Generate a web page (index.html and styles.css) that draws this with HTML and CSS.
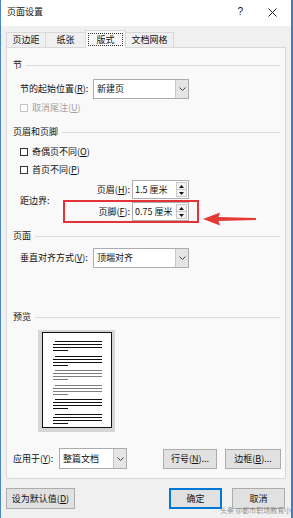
FILE: index.html
```html
<!DOCTYPE html>
<html lang="zh-CN">
<head>
  <meta charset="UTF-8" />
  <meta name="viewport" content="width=device-width, initial-scale=1.0"/>
  <title>页面设置</title>
  <link rel="stylesheet" href="styles.css">
</head>
<body>
  <div class="dialog">
    <div class="titlebar">
      <span class="title">页面设置</span>
      <span class="help">?</span>
      <svg class="close" width="9" height="9" viewBox="0 0 9 9"><path d="M0.5 0.5L8.5 8.5M8.5 0.5L0.5 8.5" stroke="#222" stroke-width="1"/></svg>
    </div>

    <div class="tabs">
      <div class="tab t1">页边距</div>
      <div class="tab t2">纸张</div>
      <div class="tab t3 active"><span class="focus">版式</span></div>
      <div class="tab t4">文档网格</div>
    </div>

    <div class="panel">
      <div class="group-head first"><span>节</span></div>
      <div class="row">
        <span class="lbl">节的起始位置(<u>R</u>):</span>
        <div class="select wide">
          <span>新建页</span>
          <i class="drop"><svg width="7" height="4" viewBox="0 0 7 4"><path d="M0.5 0.5L3.5 3.5L6.5 0.5" fill="none" stroke="#444"/></svg></i>
        </div>
      </div>
      <div class="check disabled c1"><i class="box"></i><span>取消尾注(<u>U</u>)</span></div>

      <div class="group-head g2"><span>页眉和页脚</span></div>
      <div class="check c2"><i class="box"></i><span>奇偶页不同(<u>O</u>)</span></div>
      <div class="check c3"><i class="box"></i><span>首页不同(<u>P</u>)</span></div>

      <div class="margins">
        <span class="dist">距边界:</span>
        <div class="spins">
          <span class="spin-lbl">页眉(<u>H</u>):</span>
          <div class="spin">
            <span>1.5 厘米</span>
            <div class="arrows">
              <i class="up"><svg width="5" height="3" viewBox="0 0 5 3"><path d="M2.5 0L5 3H0Z" fill="#111"/></svg></i>
              <i class="down"><svg width="5" height="3" viewBox="0 0 5 3"><path d="M0 0H5L2.5 3Z" fill="#111"/></svg></i>
            </div>
          </div>
          <span class="spin-lbl">页脚(<u>F</u>):</span>
          <div class="spin">
            <span>0.75 厘米</span>
            <div class="arrows">
              <i class="up"><svg width="5" height="3" viewBox="0 0 5 3"><path d="M2.5 0L5 3H0Z" fill="#111"/></svg></i>
              <i class="down"><svg width="5" height="3" viewBox="0 0 5 3"><path d="M0 0H5L2.5 3Z" fill="#111"/></svg></i>
            </div>
          </div>
        </div>
      </div>

      <div class="group-head g3"><span>页面</span></div>
      <div class="row r2">
        <span class="lbl">垂直对齐方式(<u>V</u>):</span>
        <div class="select wide">
          <span>顶端对齐</span>
          <i class="drop"><svg width="7" height="4" viewBox="0 0 7 4"><path d="M0.5 0.5L3.5 3.5L6.5 0.5" fill="none" stroke="#444"/></svg></i>
        </div>
      </div>

      <div class="group-head g4"><span>预览</span></div>
      <div class="preview">
        <div class="page">
          <div class="para"><i class="ln indent"></i><i class="ln"></i><i class="ln"></i><i class="ln short"></i></div>
          <div class="para"><i class="ln indent"></i><i class="ln"></i><i class="ln"></i><i class="ln short"></i></div>
          <div class="para gray"><i class="ln indent"></i><i class="ln"></i><i class="ln"></i><i class="ln short"></i></div>
          <div class="para gray"><i class="ln indent"></i><i class="ln"></i><i class="ln"></i><i class="ln short"></i></div>
          <div class="para"><i class="ln indent"></i><i class="ln"></i><i class="ln"></i><i class="ln short"></i></div>
          <div class="para"><i class="ln indent"></i><i class="ln"></i><i class="ln"></i><i class="ln short"></i></div>
        </div>
      </div>

      <div class="apply">
        <span class="apply-lbl">应用于(<u>Y</u>):</span>
        <div class="select narrow">
          <span>整篇文档</span>
          <i class="drop"><svg width="7" height="4" viewBox="0 0 7 4"><path d="M0.5 0.5L3.5 3.5L6.5 0.5" fill="none" stroke="#444"/></svg></i>
        </div>
        <button class="btn lineno">行号(<u>N</u>)...</button>
        <button class="btn border">边框(<u>B</u>)...</button>
      </div>
    </div>

    <div class="footer">
      <button class="btn default-btn">设为默认值(<u>D</u>)</button>
      <button class="btn ok">确定</button>
      <button class="btn cancel">取消</button>
    </div>

    <!-- annotation drawn over the dialog -->
    <div class="highlight"></div>
    <svg class="arrow" width="60" height="20" viewBox="0 0 60 20">
      <path d="M3 11L20 4.5L18.5 9L56 10L56 12L18.5 13L20 17.5Z" fill="#e53935"/>
    </svg>
    <span class="watermark">头条 @都市职场教育小</span>
  </div>
</body>
</html>
```

FILE: styles.css
```css
* {
  box-sizing: border-box;
}

body {
  margin: 0;
  font-family: "Noto Sans CJK SC", "Noto Sans", sans-serif;
  font-size: 9px;
  line-height: 12px;
  color: #111;
}

u {
  text-decoration: underline;
  text-underline-offset: 1px;
}

.dialog {
  position: relative;
  width: 293px;
  height: 518px;
  background: #f0f0f0;
  border-left: 1px solid #4a86c8;
  border-right: 2px solid #3f7dc0;
  overflow: hidden;
}

/* title bar */
.titlebar {
  display: flex;
  align-items: center;
  height: 26px;
  padding: 0 14px 2px 6px;
  background: #fff;
}

.title {
  flex: 1;
}

.help {
  font-family: "Liberation Sans", sans-serif;
  font-size: 10px;
  margin-right: 25px;
}

.close {
  display: block;
}

/* tabs */
.tabs {
  display: flex;
  align-items: flex-end;
  height: 21px;
  padding-left: 5px;
}

.tab {
  height: 15px;
  border: 1px solid #d9d9d9;
  border-bottom: none;
  margin-right: -1px;
  display: flex;
  align-items: center;
  justify-content: center;
  background: #f0f0f0;
}

.t1 { width: 40px; }
.t2 { width: 41px; }
.t3 { width: 41px; }
.t4 { width: 49px; }

.tab.active {
  height: 18px;
  margin-bottom: -1px;
  background: #f9f9f9;
  position: relative;
  z-index: 1;
}

.focus {
  border: 1px dotted #333;
  padding: 0 7px;
  line-height: 11px;
}

/* tab page */
.panel {
  margin: 0 5px;
  height: 432px;
  border: 1px solid #d9d9d9;
  background: #f9f9f9;
}

.group-head {
  display: flex;
  align-items: center;
  gap: 4px;
  height: 12px;
  padding: 0 5px 0 6px;
}

.group-head::after {
  content: "";
  flex: 1;
  height: 1px;
  background: #dcdcdc;
}

.group-head.first { margin-top: 11px; }
.group-head.g2 { margin-top: 12px; }
.group-head.g3 { margin-top: 9px; }
.group-head.g4 { margin-top: 43px; }

.row {
  display: flex;
  align-items: center;
  height: 20px;
  margin-top: 8px;
  padding-left: 13px;
}

.row.r2 { margin-top: 6px; }

.lbl {
  width: 73px;
}

.select {
  display: flex;
  height: 100%;
  border: 1px solid #acacac;
  background: #fff;
}

.select span {
  flex: 1;
  padding-left: 3px;
  display: flex;
  align-items: center;
}

.select.wide { width: 96px; }
.select.narrow { width: 68px; height: 21px; }

.drop {
  width: 13px;
  display: flex;
  align-items: center;
  justify-content: center;
  background: #e5e5e5;
  border-left: 1px solid #c8c8c8;
}

.drop svg {
  display: block;
}

/* check boxes */
.check {
  display: flex;
  align-items: center;
  gap: 4px;
  height: 12px;
  padding-left: 13px;
}

.check .box {
  width: 8px;
  height: 8px;
  border: 1px solid #333;
  background: #fff;
}

.check.disabled { color: #a3a3a3; }
.check.disabled .box { border-color: #c6c6c6; }

.c1 { margin-top: 3px; }
.c2 { margin-top: 8px; }
.c3 { margin-top: 6px; }

/* header / footer distance */
.margins {
  display: flex;
  align-items: center;
  height: 41px;
  margin-top: 4px;
  padding-left: 13px;
}

.dist {
  width: 60px;
}

.spins {
  display: grid;
  grid-template-columns: 50px 57px;
  grid-template-rows: 19px 19px;
  column-gap: 2px;
  row-gap: 3px;
  align-items: center;
}

.spin-lbl {
  text-align: right;
}

.spin {
  display: flex;
  height: 19px;
  border: 1px solid #abadb3;
  background: #fff;
}

.spin span {
  flex: 1;
  padding-left: 2px;
  display: flex;
  align-items: center;
}

.arrows {
  width: 11px;
  margin: 1px 1px 1px 0;
  display: flex;
  flex-direction: column;
}

.arrows i {
  flex: 1;
  display: flex;
  align-items: center;
  justify-content: center;
  border: 1px solid #c9c9c9;
  background: #f4f4f4;
}

.arrows i + i {
  border-top: none;
}

.arrows svg {
  display: block;
}

/* preview */
.preview {
  width: 77px;
  height: 102px;
  margin: 7px 0 0 31px;
  padding: 2px 3px 4px 4px;
  background: #d6d6d6;
}

.page {
  height: 100%;
  border: 1px solid #111;
  background: #fff;
  padding: 8px 0 0 10px;
}

.para {
  display: flex;
  flex-direction: column;
  gap: 2px;
  width: 49px;
  margin-bottom: 4.6px;
}

.ln {
  display: block;
  height: 1px;
  background: #111;
}

.ln.indent { margin-left: 2px; }
.ln.short { width: 15px; }

.para.gray .ln { background: #7d7d7d; }

/* apply row */
.apply {
  display: flex;
  align-items: center;
  height: 21px;
  margin-top: 16px;
  padding-left: 6px;
}

.apply-lbl {
  width: 46px;
}

.btn {
  font-family: inherit;
  font-size: 9px;
  line-height: 12px;
  color: #111;
  height: 20px;
  padding: 0;
  border: 1px solid #adadad;
  background: #e1e1e1;
}

.lineno {
  width: 54px;
  margin-left: 36px;
}

.border {
  width: 56px;
  margin-left: 8px;
}

/* footer buttons */
.footer {
  display: flex;
  align-items: center;
  height: 39px;
  padding: 0 6px 0 5px;
}

.footer .btn {
  height: 21px;
}

.default-btn {
  width: 69px;
}

.ok {
  width: 53px;
  margin-left: auto;
  border-color: #0078d7;
  box-shadow: inset 0 0 0 1px #0078d7;
}

.cancel {
  width: 53px;
  margin-left: 10px;
}

/* annotation overlays */
.highlight {
  position: absolute;
  left: 62px;
  top: 200px;
  width: 136px;
  height: 23px;
  border: 2px solid #e5323a;
}

.arrow {
  position: absolute;
  left: 199px;
  top: 208px;
}

.watermark {
  position: absolute;
  left: 219px;
  top: 506px;
  font-size: 7px;
  line-height: 9px;
  color: rgba(110, 110, 110, 0.75);
  white-space: nowrap;
}
```
